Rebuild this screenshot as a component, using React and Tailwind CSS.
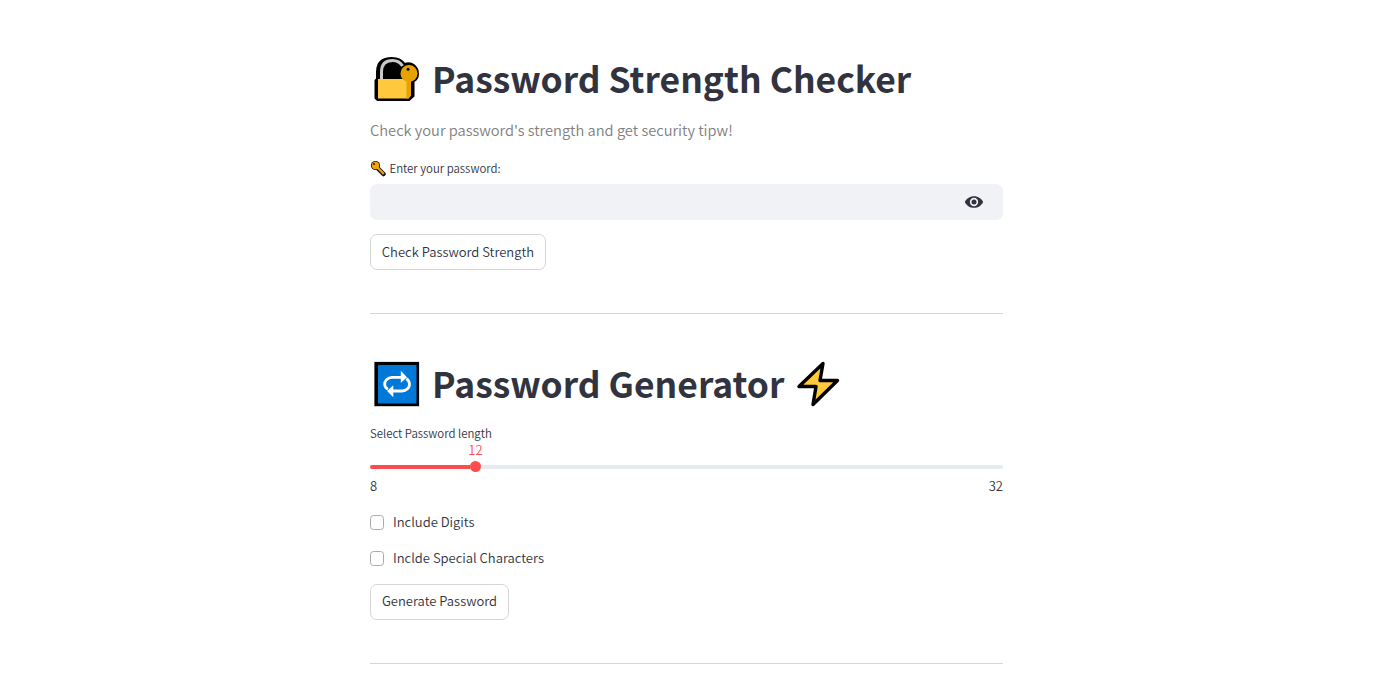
import React, { useState } from 'react';

const LockIcon = () => (
  <svg className="block h-[60px] w-[60px] shrink-0 -ml-[5px]" viewBox="0 0 60 60">
    <path d="M12 29V22C12 12 18 8 27 8C34 8 37 10.500 39.500 14C47 11 53 17 53 24C53 28 51 30 48.500 31.500V46L44 50H12.500L10.500 48V30.500Z" fill="#000" stroke="#000" strokeWidth="2" strokeLinejoin="round" />
    <path d="M16.500 30V22C16.500 14 21 10.500 27.500 10.500C32 10.500 35.500 12.500 37.500 16" fill="none" stroke="#c8c8c8" strokeWidth="3" />
    <path d="M13 29H46V45.500L43.500 48.500H13Z" fill="#ffc83d" />
    <path d="M41.500 29H46V45.500L43.500 48.500H41.500Z" fill="#e8a200" />
    <circle cx="44" cy="23.500" r="8.500" fill="#e8a200" />
    <circle cx="43" cy="19.300" r="1.500" fill="#000" />
  </svg>
);

const KeyIcon = () => (
  <svg className="block h-[18px] w-[19.500px] shrink-0" viewBox="0 0 19.500 18">
    <path d="M7.500 9L13.500 15" stroke="#111" strokeWidth="4.500" strokeLinecap="round" fill="none" />
    <circle cx="5.500" cy="6.500" r="4.600" fill="#111" />
    <path d="M7 8L13.800 15" stroke="#f0a30a" strokeWidth="2.300" fill="none" />
    <circle cx="5.500" cy="6.500" r="3.700" fill="#f0a30a" />
    <circle cx="4" cy="5" r=".9" fill="#111" />
  </svg>
);

const RepeatIcon = () => (
  <svg className="block h-[60px] w-[60px] shrink-0 -ml-[5px]" viewBox="0 0 60 60">
    <rect x="9" y="6.500" width="45.500" height="45.500" fill="#ccc" />
    <rect x="9.500" y="7" width="44.500" height="44" fill="#000" />
    <rect x="13" y="10" width="38.500" height="38.500" fill="#0078d7" />
    <path d="M23 34.300C19 32.500 18.700 27.500 21.500 24.700C23 23.200 25 22.300 27 22.300H36.500M41.300 23.800C45 26 45.500 31 42.500 33.800C41 35.300 39 36 37 36H28" fill="none" stroke="#fff" strokeWidth="2.800" />
    <path d="M35.800 15.800L42 22.300L35.800 28ZM28.300 30.300L22.100 36L28.300 42.200Z" fill="#fff" />
  </svg>
);

const BoltIcon = () => (
  <svg className="block h-[60px] w-[70px] shrink-0 -ml-[4.500px]" viewBox="0 0 70 60">
    <path d="M43 8.500L19 31.500H36L33 49.500L57.500 25.500H40L43 8.500Z" fill="#ffc83d" stroke="#000" strokeWidth="3.400" strokeLinejoin="round" />
  </svg>
);

const EyeIcon = () => (
  <svg className="block h-[20px] w-[20px]" viewBox="0 0 24 24" fill="#31333f">
    <path d="M12 5C7 5 2.730 7.900 1 12c1.730 4.100 6 7 11 7s9.270-2.900 11-7c-1.730-4.100-6-7-11-7zm0 12a5 5 0 110-10 5 5 0 010 10zm0-8a3 3 0 100 6 3 3 0 000-6z" />
  </svg>
);

function Check({ label }) {
  const [on, setOn] = useState(false);
  return (
    <label className="flex h-[22px] items-center gap-[9px] text-[13.030px]">
      <input
        type="checkbox"
        checked={on}
        onChange={() => setOn(!on)}
        className="h-[15px] w-[14px] appearance-none rounded-[3.500px] border border-[#a9aab0] bg-white checked:bg-[#ff4b4b]"
      />
      <span>{label}</span>
    </label>
  );
}

const Title = ({ children }) => (
  <h1 className="flex h-[60px] items-center whitespace-pre text-[35.450px] leading-[60px] font-bold">{children}</h1>
);

export default function App() {
  return (
    <main className="h-[681px] overflow-hidden bg-white pt-[50px] font-['Noto_Sans_CJK_SC',sans-serif] font-[350] text-[#31333f]">
      <div className="ml-[370px] flex w-[633px] flex-col items-start">
        <Title>
          <LockIcon />
          <span className="ml-[7px] pb-[4px]">Password Strength Checker</span>
        </Title>
        <p className="mt-[8px] h-[24px] text-[14.660px] leading-[24px] whitespace-nowrap text-[#808080]">
          Check your password's strength and get security tipw!
        </p>
        <label className="mt-[17px] flex h-[18px] items-center text-[11.420px] leading-[18px]">
          <KeyIcon />
          <span>Enter your password:</span>
        </label>
        <div className="mt-[7px] flex h-[36px] w-full items-center rounded-[7px] bg-[#f0f2f6] pr-[19px]">
          <input type="password" aria-label="Password" className="h-full min-w-0 flex-1 bg-transparent px-3 outline-none" />
          <EyeIcon />
        </div>
        <button className="mt-[14px] h-[36px] w-[176px] rounded-[7px] border border-[#d6d6d9] text-[13.030px] whitespace-nowrap">
          Check Password Strength
        </button>
        <hr className="mt-[43px] w-full border-t border-[#d6d6d9]" />
        <div className="mt-[41px]">
          <Title>
            <RepeatIcon />
            <span className="ml-[7px] pb-[4px]">Password Generator</span>
            <BoltIcon />
          </Title>
        </div>
        <div className="mt-[9px] h-[18px] text-[11.420px] leading-[18px]">Select Password length</div>
        <div className="h-[16px] w-[211px] text-center text-[13px] leading-[16px] text-[#ff4b4b]">12</div>
        <div className="mt-[1px] flex h-[16px] w-full items-center">
          <div className="h-[4px] w-[100px] rounded-l-full bg-[#ff4b4b]" />
          <div className="mb-[1px] h-[11px] w-[11px] rounded-full bg-[#ff4b4b]" />
          <div className="h-[4px] flex-1 rounded-r-full bg-[#e6eaf1]" />
        </div>
        <div className="mt-[1px] flex h-[20px] w-full justify-between text-[13px] leading-[20px]">
          <span>8</span>
          <span>32</span>
        </div>
        <div className="mt-[15px] flex flex-col gap-[14px]">
          <Check label="Include Digits" />
          <Check label="Inclde Special Characters" />
        </div>
        <button className="mt-[15px] h-[36px] w-[139px] rounded-[7px] border border-[#d6d6d9] pb-[2px] text-[13.030px] whitespace-nowrap">
          Generate Password
        </button>
        <hr className="mt-[43px] w-full border-t border-[#d6d6d9]" />
      </div>
    </main>
  );
}
